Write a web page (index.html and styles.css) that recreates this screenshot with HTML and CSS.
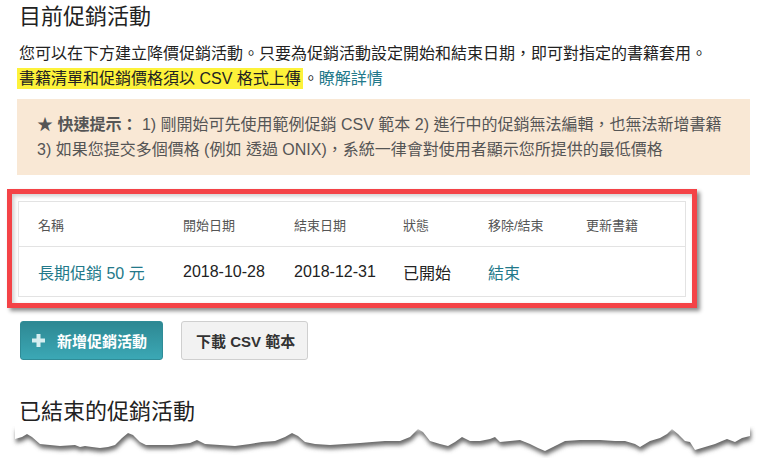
FILE: index.html
```html
<!DOCTYPE html>
<html lang="zh-Hant">
<head>
<meta charset="utf-8">
<title>目前促銷活動</title>
<link rel="stylesheet" href="styles.css">
</head>
<body>
<div class="page">
  <h1 class="title">目前促銷活動</h1>
  <p class="intro">您可以在下方建立降價促銷活動。只要為促銷活動設定開始和結束日期，即可對指定的書籍套用。<br><mark class="hl">書籍清單和促銷價格須以 CSV 格式上傳</mark>。<a class="link" href="#">瞭解詳情</a></p>
  <div class="tip"><b>★ 快速提示：</b> 1) 剛開始可先使用範例促銷 CSV 範本 2) 進行中的促銷無法編輯，也無法新增書籍<br>3) 如果您提交多個價格 (例如 透過 ONIX)，系統一律會對使用者顯示您所提供的最低價格</div>
  <div class="annot">
    <div class="table">
      <div class="row head">
        <span>名稱</span><span>開始日期</span><span>結束日期</span><span>狀態</span><span>移除/結束</span><span>更新書籍</span>
      </div>
      <div class="row body">
        <a class="link" href="#">長期促銷 50 元</a><span>2018-10-28</span><span>2018-12-31</span><span>已開始</span><a class="link" href="#">結束</a><span></span>
      </div>
    </div>
  </div>
  <div class="actions">
    <button class="btn primary"><svg class="plus" width="13" height="13" viewBox="0 0 13 13"><path d="M6.5 0v13M0 6.5h13" stroke="#d6eef0" stroke-width="4"/></svg>新增促銷活動</button>
    <button class="btn plain">下載 CSV 範本</button>
  </div>
  <h2 class="title2">已結束的促銷活動</h2>
</div>
<svg class="torn" width="758" height="33" viewBox="0 0 758 33">
  <defs>
    <filter id="sh" x="-5%" y="-50%" width="110%" height="200%"><feGaussianBlur stdDeviation="2.2"/></filter>
    <path id="edge" d="M15,0 L15,13 L22,11 L27,8 L32,11 L40,18 L50,19 L60,20 L75,19 L80,21 L85,20 L92,21 L100,22 L108,21 L115,19 L122,12 L128,7 L133,9 L140,16 L146,19 L160,19 L172,19 L180,18 L190,17 L197,14 L205,18 L220,19 L235,20 L250,18 L262,16 L275,15 L285,11 L292,7 L298,10 L305,16 L315,18 L330,19 L345,18 L360,17 L372,16 L385,15 L400,15 L410,11 L418,3 L423,6 L430,15 L440,18 L448,20 L455,16 L462,11 L470,15 L480,15 L490,13 L495,11 L500,16 L510,15 L520,14 L530,18 L538,22 L545,25 L555,20 L565,15 L580,14 L600,14 L615,15 L625,15 L635,18 L640,21 L650,15 L660,12 L667,8 L672,3 L678,8 L685,15 L690,16 L695,24 L705,21 L715,18 L722,15 L727,13 L735,16 L742,12 L750,10 L750,0 Z"/>
  </defs>
  <use href="#edge" fill="#6a6a6a" filter="url(#sh)" transform="translate(1,4)"/>
  <use href="#edge" fill="#ffffff"/>
</svg>
</body>
</html>
```
FILE: styles.css
```css
html, body {
  margin: 0;
  padding: 0;
  background: #fff;
}
body {
  font-family: "Liberation Sans", "Noto Sans CJK TC", sans-serif;
  color: #222;
  width: 758px;
  height: 458px;
  overflow: hidden;
}
.page {
  padding: 0 8px 0 17px;
}
.title {
  font-size: 22px;
  font-weight: normal;
  line-height: 28px;
  margin: 3px 0 10px 2px;
  color: #222;
}
.intro {
  font-size: 16px;
  line-height: 25px;
  margin: 0;
  padding-left: 2px;
  white-space: nowrap;
}
.hl {
  background: #fdf23a;
  color: #222;
  padding: 2px 2px;
  margin-left: -2px;
}
.link {
  color: #23798a;
  text-decoration: none;
}
.tip {
  margin-top: 8px;
  background: #f9e8d5;
  color: #555;
  font-size: 16px;
  line-height: 25px;
  padding: 13px 6px 13px 20px;
  white-space: nowrap;
  overflow: hidden;
}
.tip b {
  font-weight: bold;
}
.annot {
  margin: 14px 0 0 -10px;
  width: 690px;
  box-sizing: border-box;
  border: 5px solid #f44347;
  padding: 7px 6px 6px 6px;
  box-shadow: 3px 3px 4px rgba(0, 0, 0, 0.45), inset 2px 2px 4px rgba(0, 0, 0, 0.2);
}
.table {
  border: 1px solid #e3e3e3;
}
.row {
  display: grid;
  grid-template-columns: 145px 111px 109px 85px 98px 1fr;
  align-items: center;
  padding-left: 19px;
}
.row.head {
  height: 44px;
  font-size: 13px;
  color: #555;
  border-bottom: 1px solid #e3e3e3;
}
.row.body {
  height: 49px;
  font-size: 16px;
  color: #222;
}
.actions {
  display: flex;
  gap: 18px;
  margin: 13px 0 0 3px;
}
.btn {
  font-family: "Liberation Sans", "Noto Sans CJK TC", sans-serif;
  font-size: 15px;
  font-weight: bold;
  height: 39px;
  border-radius: 3px;
  display: flex;
  align-items: center;
  box-sizing: border-box;
}
.primary {
  background: linear-gradient(#2e8893, #3ba8b5);
  border: 1px solid #2f8c97;
  color: #fff;
  padding: 0 15px 0 11px;
  gap: 12px;
}
.plain {
  background: #f2f2f2;
  border: 1px solid #cfcfcf;
  color: #333;
  padding: 0 12px 0 14px;
}
.title2 {
  font-size: 22px;
  font-weight: normal;
  line-height: 28px;
  margin: 38px 0 0 2px;
  color: #222;
}
.torn {
  display: block;
}
```
